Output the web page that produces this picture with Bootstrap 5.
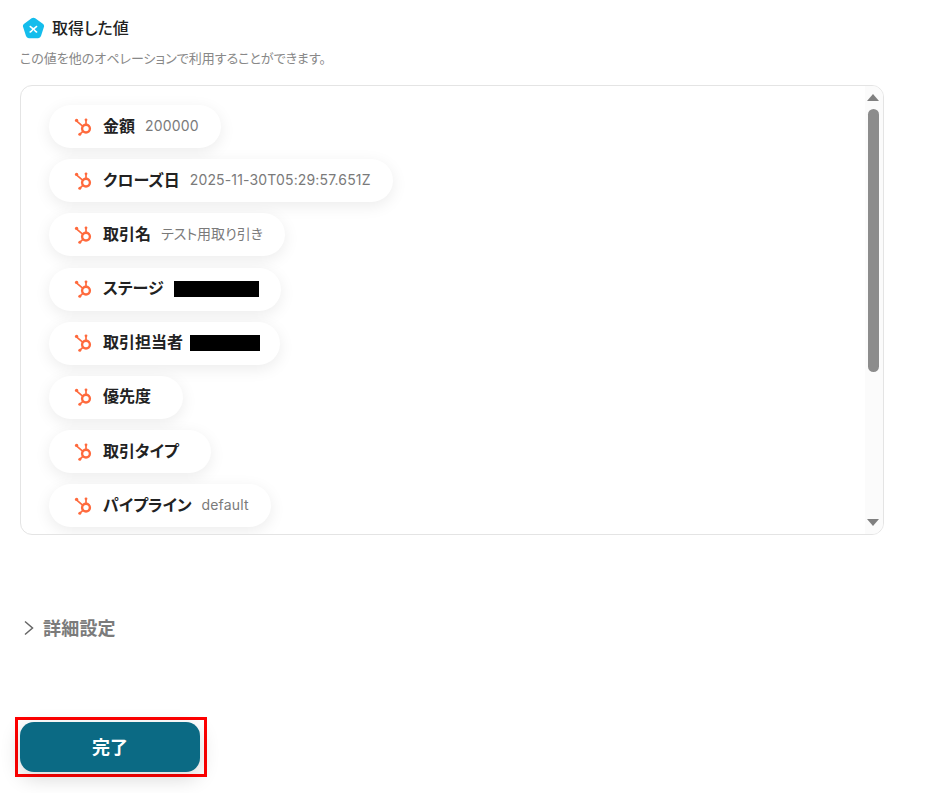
<!DOCTYPE html>
<html lang="ja">
<head>
<meta charset="utf-8">
<title>取得した値</title>
<link href="https://cdn.jsdelivr.net/npm/bootstrap@5.3.0/dist/css/bootstrap.min.css" rel="stylesheet">
<style>
html,body{height:793px;overflow:hidden;background:#fff}
body{font-family:Inter,"Noto Sans CJK JP",sans-serif;color:#222;font-feature-settings:"palt"}
.page-wrap{padding:16px 44px 0 20px}
.head-row{height:24px;padding-left:2px;gap:7px}
.head-title{font-size:16px;font-weight:500;color:#222;line-height:24px}
.head-note{font-size:13px;color:#888;margin-top:10px;line-height:16px}
.value-box{margin-top:19px;height:450px;border:1px solid #e4e4e4;border-radius:12px;overflow:hidden;position:relative}
.value-list{padding:19px 0 0 28px;gap:11.2px}
.value-pill{height:43px;border-radius:22px;background:#fff;box-shadow:0 4px 16px rgba(0,0,0,.08);padding:0 22px 0 25px;gap:10px;width:max-content}
.pill-icon{flex:none;margin-right:-1px}
.pill-name{font-size:16px;font-weight:700;color:#222;white-space:nowrap;padding-bottom:2px}
.pill-val{font-size:14px;color:#7a7a7a;white-space:nowrap;letter-spacing:.15px;padding-bottom:2px}
.pill-val-cjk{letter-spacing:0}
.redact{display:inline-block;background:#000;height:16px}
.redact-tight{margin:0 -2px 0 -3px}
.track{position:absolute;top:0;right:0;bottom:0;width:18px;background:#fbfbfb}
.arrow-up,.arrow-down{position:absolute;left:2px;width:0;height:0;border-left:6.5px solid transparent;border-right:6.5px solid transparent}
.arrow-up{top:8px;border-bottom:7px solid #808080}
.arrow-down{bottom:8px;border-top:7px solid #808080}
.thumb{position:absolute;left:3px;top:23px;width:11px;height:263px;background:#8c8c8c;border-radius:6px}
.detail-row{margin-top:81px;height:24px;padding-left:3px;gap:8px}
.detail-label{font-size:18px;font-weight:700;color:#7b7b7b;letter-spacing:.2px}
.done-frame{margin-top:77px;margin-left:-5px;width:192px;height:60px;border:3px solid #f00;padding:2px;box-sizing:border-box}
.done-btn{width:180px;height:50px;background:#0b6a84;color:#fff;border:0;border-radius:14px;font-size:18px;font-weight:700;box-shadow:0 6px 20px rgba(0,0,0,.16);padding:0}
.done-btn:hover{background:#0b6a84;color:#fff}
</style>
</head>
<body>
<svg width="0" height="0" class="d-block" aria-hidden="true">
<symbol id="hubspot" viewBox="0 0 20 20">
<g fill="none" stroke="#ff6a3d" stroke-linecap="round">
<circle cx="12" cy="11.6" r="3.900" stroke-width="2.400"/>
<path d="M12 7.600V3.400M8.900 9.300 3 4.400M8.900 14.400 6.200 16.900" stroke-width="1.700"/>
</g>
<circle cx="12" cy="2.800" r="1.400" fill="#ff6a3d"/>
<circle cx="2.600" cy="3.400" r="1.700" fill="#ff6a3d"/>
<circle cx="5.800" cy="17.200" r="1.500" fill="#ff6a3d"/>
</symbol>
</svg>
<div class="page-wrap">
<div class="d-flex align-items-center head-row">
<svg width="23" height="23" viewBox="0 0 23 23" aria-hidden="true"><path d="M9.6 1.3a3 3 0 0 1 3.6 0l7.6 5.4a3 3 0 0 1 1.1 3.4l-2.9 9a3 3 0 0 1-2.9 2.1H6.9A3 3 0 0 1 4 19.1l-2.9-9a3 3 0 0 1 1.1-3.4z" fill="#14bdec"/><path d="M8.2 9.5c1.600 1 2 2 3.200 2.500c1.200-.5 1.600-1.500 3.200-2.500M8.200 15c1.600-1 2-2 3.200-3c1.200 1 1.600 2 3.200 3" fill="none" stroke="#fff" stroke-width="1.500" stroke-linecap="round"/></svg>
<span class="head-title">取得した値</span>
</div>
<div class="head-note">この値を他のオペレーションで利用することができます。</div>
<div class="value-box">
<div class="d-flex flex-column value-list">
<div class="d-flex align-items-center value-pill"><svg class="pill-icon" width="20" height="20" aria-hidden="true"><use href="#hubspot"/></svg><span class="pill-name">金額</span><span class="pill-val">200000</span></div>
<div class="d-flex align-items-center value-pill"><svg class="pill-icon" width="20" height="20" aria-hidden="true"><use href="#hubspot"/></svg><span class="pill-name">クローズ日</span><span class="pill-val">2025-11-30T05:29:57.651Z</span></div>
<div class="d-flex align-items-center value-pill"><svg class="pill-icon" width="20" height="20" aria-hidden="true"><use href="#hubspot"/></svg><span class="pill-name">取引名</span><span class="pill-val pill-val-cjk">テスト用取り引き</span></div>
<div class="d-flex align-items-center value-pill"><svg class="pill-icon" width="20" height="20" aria-hidden="true"><use href="#hubspot"/></svg><span class="pill-name">ステージ</span><span class="redact" style="width:85px"></span></div>
<div class="d-flex align-items-center value-pill"><svg class="pill-icon" width="20" height="20" aria-hidden="true"><use href="#hubspot"/></svg><span class="pill-name">取引担当者</span><span class="redact redact-tight" style="width:70px"></span></div>
<div class="d-flex align-items-center value-pill"><svg class="pill-icon" width="20" height="20" aria-hidden="true"><use href="#hubspot"/></svg><span class="pill-name">優先度</span><span class="pill-val"></span></div>
<div class="d-flex align-items-center value-pill"><svg class="pill-icon" width="20" height="20" aria-hidden="true"><use href="#hubspot"/></svg><span class="pill-name">取引タイプ</span><span class="pill-val"></span></div>
<div class="d-flex align-items-center value-pill"><svg class="pill-icon" width="20" height="20" aria-hidden="true"><use href="#hubspot"/></svg><span class="pill-name">パイプライン</span><span class="pill-val">default</span></div>
</div>
<div class="track"><span class="arrow-up"></span><span class="thumb"></span><span class="arrow-down"></span></div>
</div>
<div class="d-flex align-items-center detail-row">
<svg width="12" height="16" viewBox="0 0 12 16" aria-hidden="true"><path d="M2 1.500 9.500 8 2 14.500" fill="none" stroke="#666" stroke-width="1.500"/></svg>
<span class="detail-label">詳細設定</span>
</div>
<div class="done-frame"><button type="button" class="btn done-btn">完了</button></div>
</div>
<script src="https://cdn.jsdelivr.net/npm/bootstrap@5.3.0/dist/js/bootstrap.bundle.min.js"></script>
</body>
</html>
